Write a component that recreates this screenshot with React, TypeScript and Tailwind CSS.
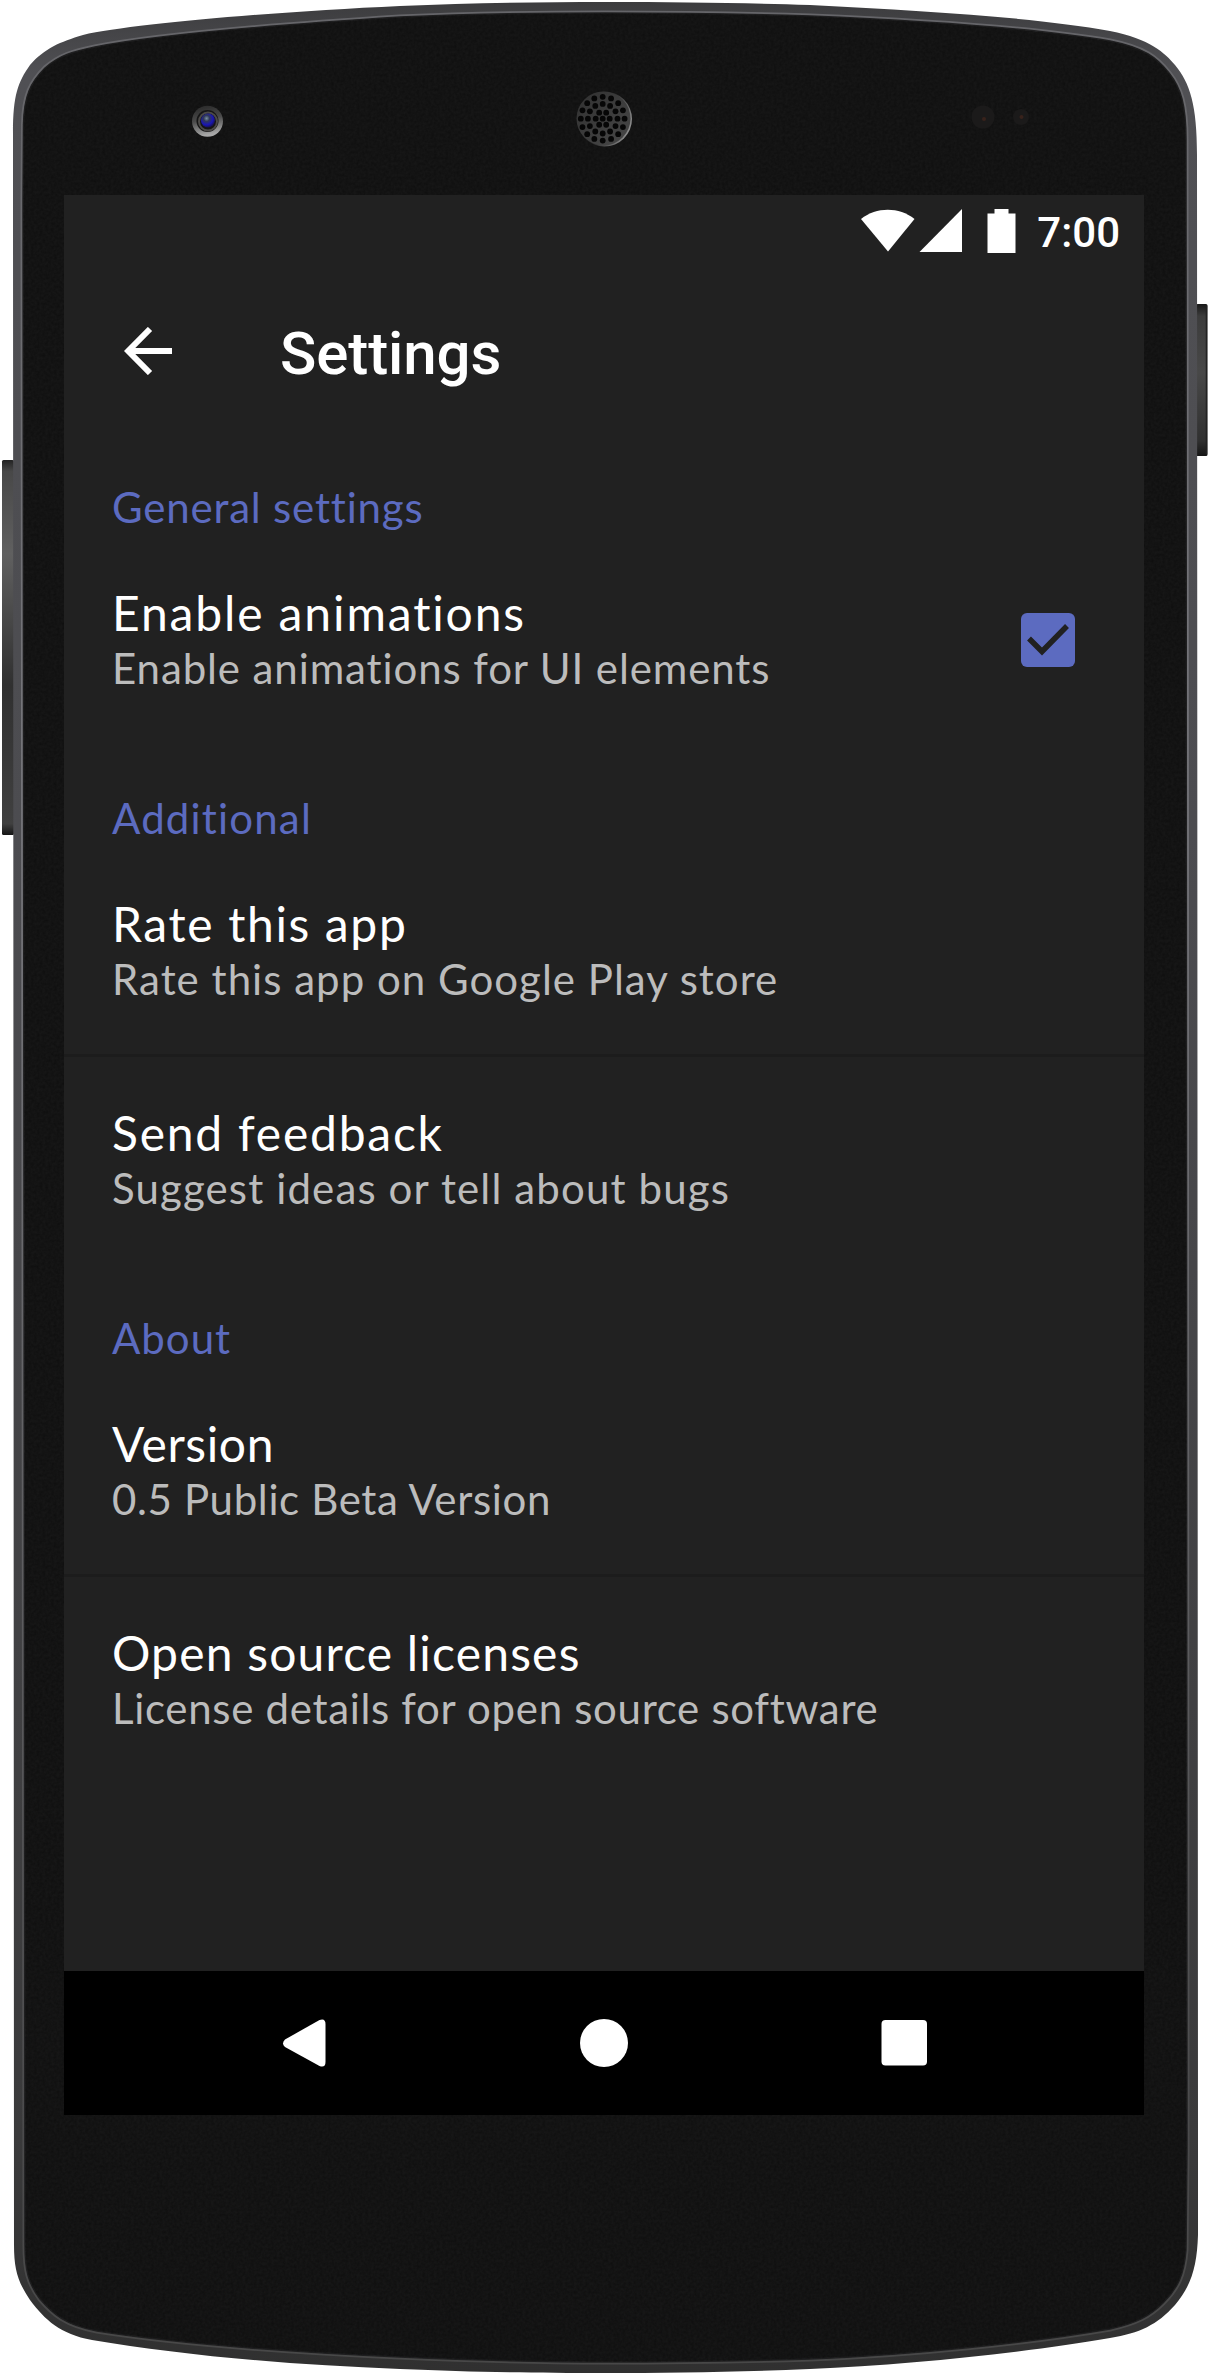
import React from "react";

const OUTER =
  "M13 200 L13 133 C13 95 18 82 30 65 C45 48 60 42 83 35 C130 24 270 12 400 6 C470 3 540 2 605 2 C680 2 750 3 810 5 C930 11 1040 18 1110 31 C1150 39 1165 53 1175 65 C1190 83 1197 105 1197 155 L1198 2150 L1198 2235 C1197 2265 1192 2285 1175 2305 C1157 2325 1140 2333 1110 2338 C1030 2352 910 2365 810 2369 C740 2372 670 2373 605 2373 C530 2373 470 2372 400 2369 C290 2365 180 2355 92 2340 C60 2334 45 2320 30 2300 C18 2282 14 2270 14 2245 Z";
const INNER =
  "M23 200 L23.500 125 C24 95 31 82 45 68 C60 55 72 52 95 47 C160 34 290 24 400 17 C470 14 540 13 605 13 C680 13 750 14 810 16 C930 21 1040 29 1110 41 C1145 48 1157 58 1169 73 C1181 88 1186 105 1186 140 L1187 2150 L1186 2250 C1184 2275 1178 2288 1163 2303 C1150 2316 1137 2323 1110 2329 C1030 2343 910 2355 810 2359 C740 2361 670 2362 605 2362 C530 2362 470 2360 400 2357 C290 2352 180 2344 97 2331 C65 2325 53 2314 40 2299 C28 2283 25 2270 25 2245 Z";

/* Speaker holes: [ring radius, holes on the ring] */
const RINGS: [number, number][] = [
  [0, 1],
  [7, 6],
  [14.8, 12],
  [21.9, 16],
];

function DeviceFrame() {
  return (
    <svg className="absolute inset-0" width="1210" height="2375" viewBox="0 0 1210 2375" aria-hidden="true">
      <defs>
        <linearGradient id="rim" x1="0" y1="0" x2="0" y2="1">
          <stop offset="0" stopColor="#3c3c3e" />
          <stop offset="0.03" stopColor="#505054" />
          <stop offset="0.35" stopColor="#4c4c50" />
          <stop offset="0.9" stopColor="#3a3a3b" />
          <stop offset="1" stopColor="#303030" />
        </linearGradient>
        <linearGradient id="shine" x1="0" y1="0" x2="0" y2="1">
          <stop offset="0" stopColor="#656569" />
          <stop offset="0.35" stopColor="#77777c" />
          <stop offset="0.9" stopColor="#4b4b4c" />
          <stop offset="1" stopColor="#484848" />
        </linearGradient>
        <linearGradient id="keyL" x1="0" y1="0" x2="0" y2="1">
          <stop offset="0" stopColor="#222" />
          <stop offset="0.03" stopColor="#484848" />
          <stop offset="0.25" stopColor="#606060" />
          <stop offset="0.6" stopColor="#303030" />
          <stop offset="0.97" stopColor="#404040" />
          <stop offset="1" stopColor="#151515" />
        </linearGradient>
        <linearGradient id="keyR" x1="0" y1="0" x2="0" y2="1">
          <stop offset="0" stopColor="#181818" />
          <stop offset="0.08" stopColor="#3c3c3c" />
          <stop offset="0.45" stopColor="#484848" />
          <stop offset="0.9" stopColor="#303030" />
          <stop offset="1" stopColor="#151515" />
        </linearGradient>
        <linearGradient id="camRing" x1="0" y1="0" x2="0.2" y2="1">
          <stop offset="0" stopColor="#262626" />
          <stop offset="0.5" stopColor="#4a4a4a" />
          <stop offset="1" stopColor="#a8a8a8" />
        </linearGradient>
        <radialGradient id="lens" cx="0.4" cy="0.35" r="0.7">
          <stop offset="0" stopColor="#7890a0" />
          <stop offset="0.3" stopColor="#303858" />
          <stop offset="0.65" stopColor="#1a16b4" />
          <stop offset="1" stopColor="#16103a" />
        </radialGradient>
        <linearGradient id="grille" x1="0" y1="0" x2="1" y2="1">
          <stop offset="0" stopColor="#303030" />
          <stop offset="1" stopColor="#484848" />
        </linearGradient>
        <linearGradient id="grilleEdge" x1="0" y1="0.3" x2="1" y2="0.7">
          <stop offset="0.45" stopColor="#202020" />
          <stop offset="1" stopColor="#959595" />
        </linearGradient>
        <filter id="grain" x="0" y="0" width="100%" height="100%">
          <feTurbulence type="fractalNoise" baseFrequency="0.35" numOctaves="2" seed="4" />
          <feColorMatrix values="0 0 0 0 0  0 0 0 0 0  0 0 0 0 0  0.9 0 0 0 -0.25" />
          <feComposite in2="SourceGraphic" operator="in" />
        </filter>
      </defs>
      <rect x="2" y="460" width="12" height="375" rx="1.500" fill="url(#keyL)" />
      <rect x="1196" y="304" width="11.500" height="152" rx="1.500" fill="url(#keyR)" />
      <path d="M1206.500 306V454" stroke="#222" strokeWidth="1.500" />
      <path d={OUTER} fill="url(#rim)" />
      <path d={INNER} fill="#141414" stroke="url(#shine)" strokeWidth="5" />
      <path d={INNER} fill="#161616" stroke="#202021" strokeWidth="1.500" />
      <path d={INNER} fill="#000" opacity="0.55" filter="url(#grain)" />

      <circle cx="207.500" cy="121.300" r="15.500" fill="url(#camRing)" />
      <circle cx="207.500" cy="121" r="11" fill="#161616" />
      <circle cx="208" cy="121.500" r="9" fill="none" stroke="#4c4a48" strokeWidth="2" />
      <circle cx="208" cy="120.500" r="7" fill="url(#lens)" />

      <circle cx="604.500" cy="119" r="27.500" fill="url(#grilleEdge)" />
      <circle cx="603.500" cy="118.500" r="27" fill="url(#grille)" />
      {RINGS.map(([r, n]) =>
        Array.from({ length: n }, (_, i) => {
          const a = (2 * Math.PI * i) / n;
          return (
            <circle key={`${r}-${i}`} cx={602.7 + r * Math.cos(a)} cy={118.7 + r * Math.sin(a)} r="2.900" fill="#060606" />
          );
        })
      )}

      <circle cx="983" cy="117" r="11.500" fill="#1b1a1a" />
      <circle cx="984" cy="119" r="2" fill="#38221b" />
      <circle cx="1021" cy="117" r="8" fill="#1b1a1a" />
      <circle cx="1021.500" cy="117" r="2" fill="#38221b" />
    </svg>
  );
}

function StatusBar() {
  return (
    <div className="flex h-[72px] justify-end pr-[24px]">
      <svg className="mt-[13px]" width="156" height="46" viewBox="0 0 156 46" fill="#fff" aria-hidden="true">
        <path d="M0 11C15.500 -1.200 38 -1.200 53.500 11L27 43.500Z" />
        <path d="M58.500 44L101 1V44Z" />
        <path d="M126.500 5.500H133.500V1H147.500V5.500H154.500V45H126.500Z" />
      </svg>
      <span className="ml-[20px] mt-[13px] font-['Roboto'] text-[42px] font-medium leading-[50px]">7:00</span>
    </div>
  );
}

function Category({ label, tracking }: { label: string; tracking: string }) {
  return <h2 className={`h-[50px] whitespace-nowrap text-[42px] leading-[50px] text-[#5c6bc0] ${tracking}`}>{label}</h2>;
}

interface ItemProps {
  title: string;
  summary: string;
  titleTracking: string;
  summaryTracking: string;
}

function Item({ title, summary, titleTracking, summaryTracking }: ItemProps) {
  return (
    <div className="flex flex-col whitespace-nowrap">
      <span className={`text-[48px] leading-[60px] text-white ${titleTracking}`}>{title}</span>
      <span className={`text-[42px] leading-[50px] text-[#bcbcbc] ${summaryTracking}`}>{summary}</span>
    </div>
  );
}

function Divider() {
  return <div className="-mx-[48px] mb-[46px] mt-[50px] h-[3px] bg-[#1c1c1c]" />;
}

export default function App() {
  return (
    <div className="relative h-[2375px] w-[1210px] overflow-hidden bg-white pl-[64px] pt-[195px]">
      <DeviceFrame />
      <main className="relative flex h-[1920px] w-[1080px] flex-col bg-[#212121] font-['Lato',sans-serif] text-white">
        <StatusBar />
        <header className="flex h-[168px] items-center pl-[60px]">
          <svg width="48" height="48" viewBox="0 0 48 48" fill="none" stroke="#fff" strokeWidth="6" aria-hidden="true">
            <path d="M48 24H6M26 2L4.200 24L26 46" />
          </svg>
          <h1 className="ml-[108px] mt-[6px] font-['Roboto'] text-[60px] font-medium leading-[70px] tracking-[-0.1px]">Settings</h1>
        </header>

        <section className="flex flex-1 flex-col px-[48px] pt-[47px]">
          <Category label="General settings" tracking="tracking-[0.8px]" />
          <div className="mt-[51px] flex justify-between">
            <Item
              title="Enable animations"
              summary="Enable animations for UI elements"
              titleTracking="tracking-[1.87px]"
              summaryTracking="tracking-[0.89px]"
            />
            <svg className="mr-[21px] mt-[30px]" width="54" height="54" viewBox="0 0 54 54" aria-hidden="true">
              <rect width="54" height="54" rx="6" fill="#5c6bc0" />
              <path d="M8 25.500L21 38.500L46 13" fill="none" stroke="#212121" strokeWidth="5.500" />
            </svg>
          </div>

          <div className="mt-[100px]">
            <Category label="Additional" tracking="tracking-[1.17px]" />
            <div className="mt-[51px]">
              <Item
                title="Rate this app"
                summary="Rate this app on Google Play store"
                titleTracking="tracking-[1.63px]"
                summaryTracking="tracking-[1.02px]"
              />
            </div>
            <Divider />
            <Item
              title="Send feedback"
              summary="Suggest ideas or tell about bugs"
              titleTracking="tracking-[1.76px]"
              summaryTracking="tracking-[1.13px]"
            />
          </div>

          <div className="mt-[100px]">
            <Category label="About" tracking="tracking-[1px]" />
            <div className="mt-[51px]">
              <Item
                title="Version"
                summary="0.5 Public Beta Version"
                titleTracking="tracking-[0.6px]"
                summaryTracking="tracking-[0.64px]"
              />
            </div>
            <Divider />
            <Item
              title="Open source licenses"
              summary="License details for open source software"
              titleTracking="tracking-[1.18px]"
              summaryTracking="tracking-[0.68px]"
            />
          </div>
        </section>

        <nav className="h-[144px] bg-black">
          <svg width="1080" height="144" viewBox="0 0 1080 144" fill="#fff" aria-hidden="true">
            <path d="M221 68.500L255.500 49Q261.500 47 261.500 53V91Q261.500 97 255.500 95L221 76Q217 72.500 221 68.500Z" />
            <circle cx="540" cy="72" r="24" />
            <rect x="817.500" y="49" width="45.500" height="45.500" rx="4" />
          </svg>
        </nav>
      </main>
    </div>
  );
}
